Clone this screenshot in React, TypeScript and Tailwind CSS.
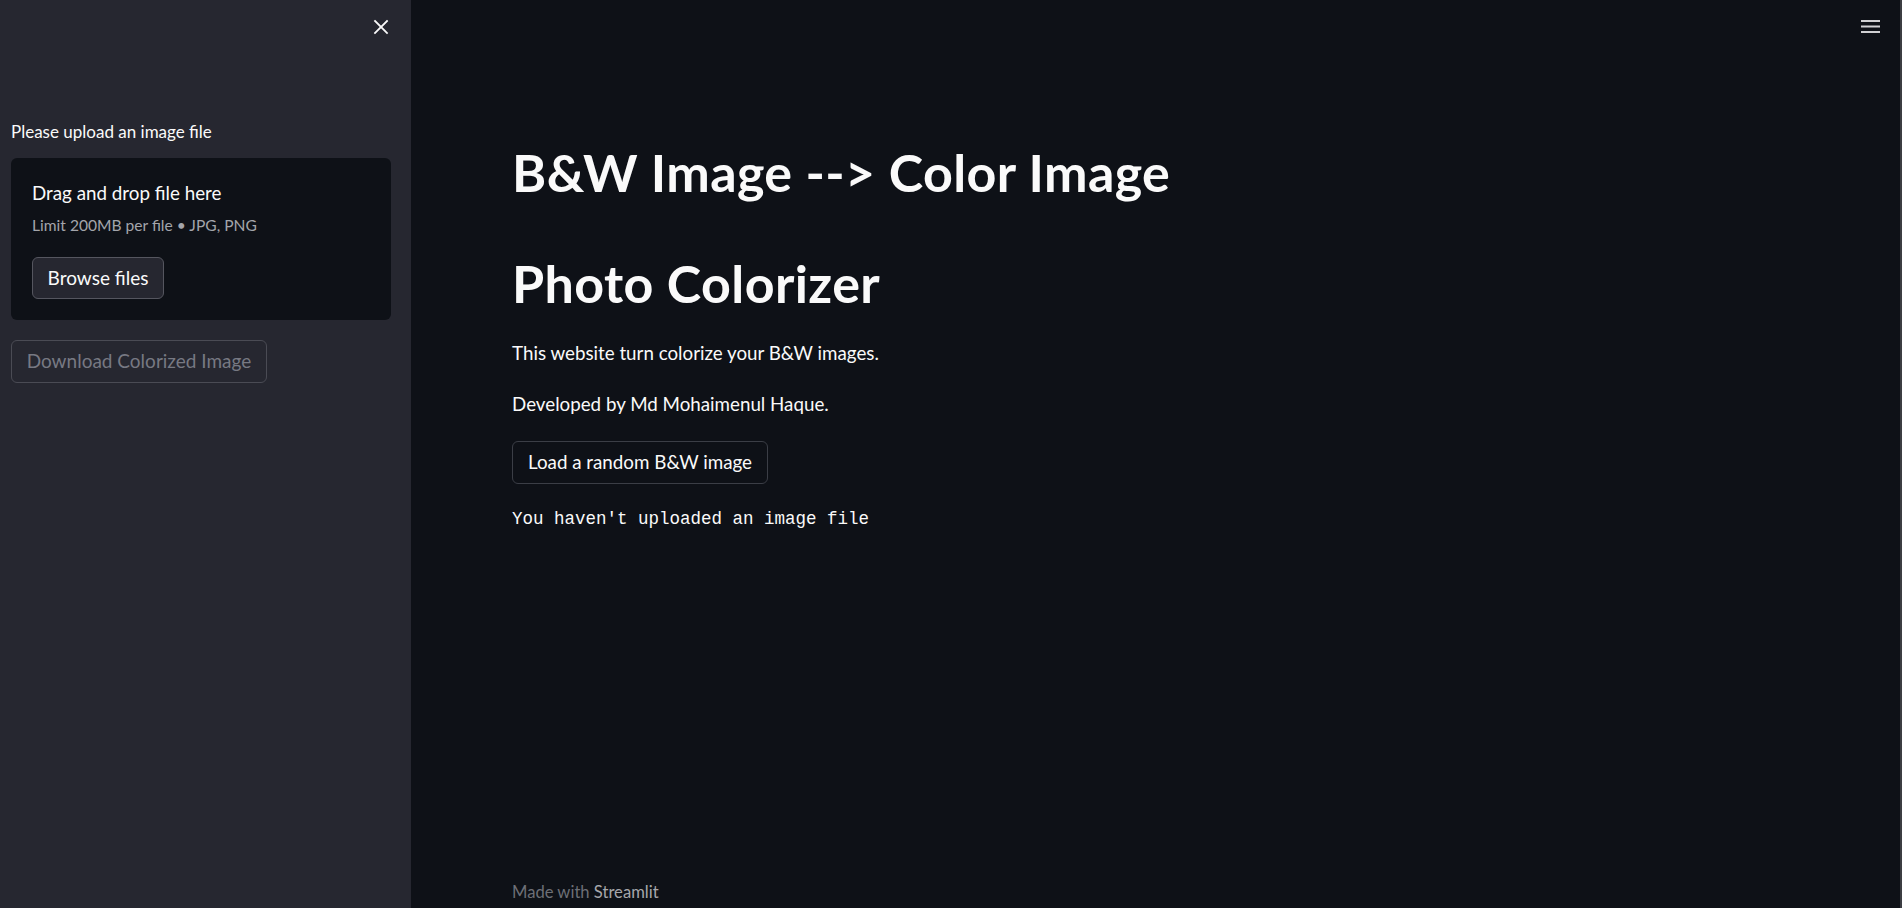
import React from 'react'

const font = "font-['Lato','Noto_Sans',sans-serif]"

const Sidebar = () => {
    return (
        <aside className='w-[411px] shrink-0 h-full bg-[#262730] flex flex-col px-[11px]'>
            <div className='flex justify-end pt-[19px] pr-[11px] h-[122px]'>
                <button className='w-[16px] h-[16px] text-[#fafafa]'>
                    <svg width="16" height="16" viewBox="0 0 16 16" fill="none" stroke="currentColor" strokeWidth="1.8" strokeLinecap="square">
                        <line x1="2" y1="2" x2="14" y2="14" />
                        <line x1="14" y1="2" x2="2" y2="14" />
                    </svg>
                </button>
            </div>
            <p className='text-[17px] leading-[20px] text-[#fafafa] h-[36px]'>Please upload an image file</p>
            <div className='w-[380px] h-[162px] bg-[#0e1117] rounded-[6px] pl-[21px] pt-[25px]'>
                <p className='text-[18.8px] leading-[20px] text-[#fafafa]'>Drag and drop file here</p>
                <p className='text-[15.6px] leading-[20px] mt-[12px] text-[#a3a5ab]'>Limit 200MB per file • JPG, PNG</p>
                <button className='mt-[22px] w-[132px] h-[42px] rounded-[6px] border border-[#55565f] bg-[#262730] text-[19px] text-[#fafafa]'>
                    Browse files
                </button>
            </div>
            <button className='mt-[20px] w-[256px] h-[43px] rounded-[6px] border border-[#4a4b54] text-[19px] text-[#777983] cursor-not-allowed'>
                Download Colorized Image
            </button>
        </aside>
    )
}

const App = () => {
    return (
        <div className={`flex w-full h-[908px] overflow-hidden bg-[#0e1117] ${font}`}>
            <Sidebar />
            <main className='flex-1 h-full flex flex-col pl-[101px] pb-[6px]'>
                <h1 className='mt-[143px] text-[52px] leading-[58px] font-bold tracking-[0.4px] text-[#fafafa]'>B&amp;W Image --&gt; Color Image</h1>
                <h1 className='mt-[53px] text-[52px] leading-[58px] font-bold tracking-[0.4px] text-[#fafafa]'>Photo Colorizer</h1>
                <p className='mt-[27px] text-[18.75px] leading-[28px] text-[#fafafa]'>This website turn colorize your B&amp;W images.</p>
                <p className='mt-[23px] text-[18.75px] leading-[28px] text-[#fafafa]'>Developed by Md Mohaimenul Haque.</p>
                <button className='mt-[23px] w-[256px] h-[43px] rounded-[6px] border border-[#3b3e46] bg-[#0e1117] text-[18.8px] text-[#fafafa]'>
                    Load a random B&amp;W image
                </button>
                <p className="mt-[23px] font-['Liberation_Mono','DejaVu_Sans_Mono',monospace] text-[17.5px] leading-[24px] text-[#fafafa]">You haven't uploaded an image file</p>
                <footer className='mt-auto text-[16.6px] leading-[20px] text-[#6d6f76]'>
                    Made with <span className='text-[#a6a7ab]'>Streamlit</span>
                </footer>
            </main>
            <div className='w-[60px] shrink-0 flex justify-center pt-[20px] pl-[2px]'>
                <svg width="20" height="14" viewBox="0 0 20 14" className='text-[#d0d0d3]'>
                    <rect x="0" y="0" width="19" height="2" fill="currentColor" />
                    <rect x="0" y="5.5" width="19" height="2" fill="currentColor" />
                    <rect x="0" y="11" width="19" height="2" fill="currentColor" />
                </svg>
            </div>
            <div className='w-[2px] shrink-0 h-full bg-[#3c3d42]' />
        </div>
    )
}

export default App
